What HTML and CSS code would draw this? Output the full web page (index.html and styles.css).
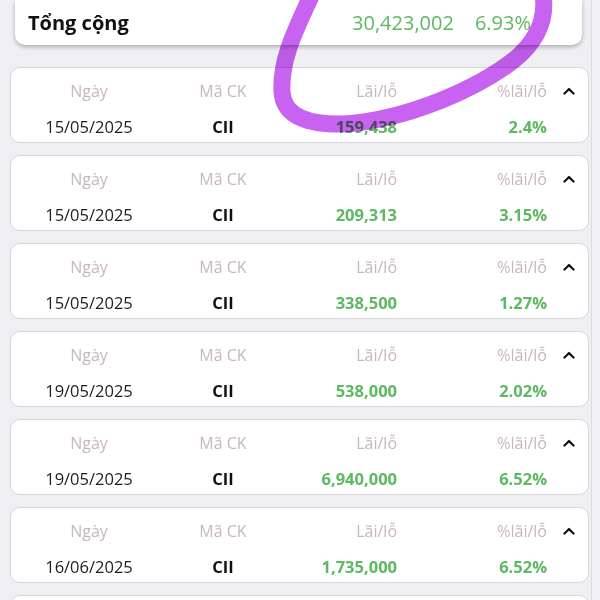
FILE: index.html
```html
<!DOCTYPE html>
<html lang="vi">
<head>
<meta charset="utf-8">
<title>Lãi/lỗ</title>
<link rel="stylesheet" href="styles.css">
</head>
<body>
<div class="screen">
  <div class="summary">
    <span class="summary-title">Tổng cộng</span>
    <span class="summary-values">
      <span class="green">30,423,002</span>
      <span class="green">6.93%</span>
    </span>
  </div>

  <div class="list">
    <div class="card">
      <span class="h c1">Ngày</span><span class="h c2">Mã CK</span><span class="h c3">Lãi/lỗ</span><span class="h c4">%lãi/lỗ</span>
      <span class="chev"><svg width="12" height="8" viewBox="0 0 12 8"><path d="M1.5 6.5 L6 2 L10.5 6.5" fill="none" stroke="#111" stroke-width="2.2" stroke-linecap="round" stroke-linejoin="round"/></svg></span>
      <span class="v c1">15/05/2025</span><span class="v c2 code">CII</span><span class="v c3 green num">159,438</span><span class="v c4 green num">2.4%</span>
    </div>
    <div class="card">
      <span class="h c1">Ngày</span><span class="h c2">Mã CK</span><span class="h c3">Lãi/lỗ</span><span class="h c4">%lãi/lỗ</span>
      <span class="chev"><svg width="12" height="8" viewBox="0 0 12 8"><path d="M1.5 6.5 L6 2 L10.5 6.5" fill="none" stroke="#111" stroke-width="2.2" stroke-linecap="round" stroke-linejoin="round"/></svg></span>
      <span class="v c1">15/05/2025</span><span class="v c2 code">CII</span><span class="v c3 green num">209,313</span><span class="v c4 green num">3.15%</span>
    </div>
    <div class="card">
      <span class="h c1">Ngày</span><span class="h c2">Mã CK</span><span class="h c3">Lãi/lỗ</span><span class="h c4">%lãi/lỗ</span>
      <span class="chev"><svg width="12" height="8" viewBox="0 0 12 8"><path d="M1.5 6.5 L6 2 L10.5 6.5" fill="none" stroke="#111" stroke-width="2.2" stroke-linecap="round" stroke-linejoin="round"/></svg></span>
      <span class="v c1">15/05/2025</span><span class="v c2 code">CII</span><span class="v c3 green num">338,500</span><span class="v c4 green num">1.27%</span>
    </div>
    <div class="card">
      <span class="h c1">Ngày</span><span class="h c2">Mã CK</span><span class="h c3">Lãi/lỗ</span><span class="h c4">%lãi/lỗ</span>
      <span class="chev"><svg width="12" height="8" viewBox="0 0 12 8"><path d="M1.5 6.5 L6 2 L10.5 6.5" fill="none" stroke="#111" stroke-width="2.2" stroke-linecap="round" stroke-linejoin="round"/></svg></span>
      <span class="v c1">19/05/2025</span><span class="v c2 code">CII</span><span class="v c3 green num">538,000</span><span class="v c4 green num">2.02%</span>
    </div>
    <div class="card">
      <span class="h c1">Ngày</span><span class="h c2">Mã CK</span><span class="h c3">Lãi/lỗ</span><span class="h c4">%lãi/lỗ</span>
      <span class="chev"><svg width="12" height="8" viewBox="0 0 12 8"><path d="M1.5 6.5 L6 2 L10.5 6.5" fill="none" stroke="#111" stroke-width="2.2" stroke-linecap="round" stroke-linejoin="round"/></svg></span>
      <span class="v c1">19/05/2025</span><span class="v c2 code">CII</span><span class="v c3 green num">6,940,000</span><span class="v c4 green num">6.52%</span>
    </div>
    <div class="card">
      <span class="h c1">Ngày</span><span class="h c2">Mã CK</span><span class="h c3">Lãi/lỗ</span><span class="h c4">%lãi/lỗ</span>
      <span class="chev"><svg width="12" height="8" viewBox="0 0 12 8"><path d="M1.5 6.5 L6 2 L10.5 6.5" fill="none" stroke="#111" stroke-width="2.2" stroke-linecap="round" stroke-linejoin="round"/></svg></span>
      <span class="v c1">16/06/2025</span><span class="v c2 code">CII</span><span class="v c3 green num">1,735,000</span><span class="v c4 green num">6.52%</span>
    </div>
    <div class="card"></div>
  </div>
</div>

<svg class="scribble" width="600" height="600" viewBox="0 0 600 600">
  <path d="M312 -6 C 298 25, 280 58, 282 92 C 284 118, 310 125, 345 124 C 410 119, 478 88, 514 60 C 536 42, 547 20, 543 -6" fill="none" stroke="#c862f0" stroke-width="17" stroke-linecap="round" stroke-linejoin="round"/>
</svg>
</body>
</html>
```

FILE: styles.css
```css
* { box-sizing: border-box; }

html, body {
  margin: 0;
  padding: 0;
  background: #f1f0f5;
}

body {
  position: relative;
  width: 600px;
  height: 600px;
  overflow: hidden;
  font-family: "Open Sans", "Noto Sans", sans-serif;
  color: #1c1c1e;
}

.screen {
  width: 592px;
  height: 600px;
  background: #efeef3;
  border-right: 1px solid #dddce2;
  overflow: hidden;
}

.summary {
  margin: 0 9px 0 15px;
  height: 45px;
  background: #fff;
  border-radius: 0 0 10px 10px;
  box-shadow: 0 2px 4px rgba(0, 0, 0, 0.28);
  display: flex;
  align-items: center;
  justify-content: space-between;
  padding: 0 51px 0 13px;
}

.summary-title {
  font-size: 20px;
  font-weight: 700;
  color: #111;
}

.summary-values {
  display: flex;
  gap: 21px;
  font-size: 20px;
  font-weight: 500;
}

.green { color: #5db862; }

.list {
  margin-top: 22px;
  padding-left: 10px;
  padding-right: 2px;
}

.card {
  height: 76px;
  margin-bottom: 12px;
  background: #fff;
  border: 1px solid #d6d5db;
  border-radius: 10px;
  display: grid;
  grid-template-columns: 156px 112px 118px 150px 1fr;
  grid-template-rows: 22px 22px;
  row-gap: 14px;
  padding-top: 12px;
  font-size: 16px;
  line-height: 22px;
}

.h {
  grid-row: 1;
  color: #c7b6bd;
}

.v {
  grid-row: 2;
  color: #1e1e1e;
  font-size: 16.5px;
}

.c1 { grid-column: 1; text-align: center; }
.c2 { grid-column: 2; text-align: center; }
.c3 { grid-column: 3; text-align: right; }
.c4 { grid-column: 4; text-align: right; }

.code {
  font-weight: 700;
  color: #111;
}

.num {
  font-weight: 700;
  color: #5db862;
}

.chev {
  grid-column: 5;
  grid-row: 1;
  display: flex;
  align-items: center;
  padding-left: 16px;
}

.chev svg { display: block; }

.scribble {
  position: absolute;
  left: 0;
  top: 0;
  pointer-events: none;
  mix-blend-mode: multiply;
}
```
